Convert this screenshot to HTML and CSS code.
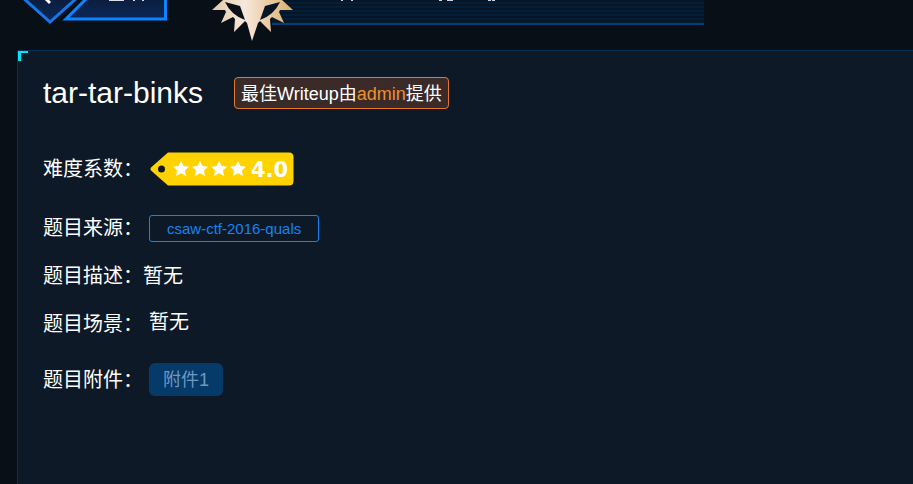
FILE: index.html
```
<!DOCTYPE html>
<html lang="zh-CN">
<head>
  <meta charset="UTF-8" />
  <title>tar-tar-binks</title>
  <meta name="viewport" content="width=device-width, initial-scale=1" />
  <link rel="stylesheet" href="styles.css">
</head>
<body>
  <header class="top-bar">
    <a class="back" href="#" aria-label="返回">
      <svg width="148" height="26" viewBox="0 0 148 26">
        <defs>
          <linearGradient id="backFill" x1="0" y1="0" x2="0" y2="1">
            <stop offset="0" stop-color="#0c1c3c" />
            <stop offset="1" stop-color="#0b2858" />
          </linearGradient>
        </defs>
        <path d="M2 -3 L30 22 L58 -3 Z" fill="url(#backFill)" stroke="#1478e8" stroke-width="3" />
        <path d="M68 -3 L46 19 H145.500 V-3 Z" fill="url(#backFill)" stroke="#0a84ff" stroke-width="3" />
        <path d="M25 -2 L30 3" stroke="#fff" stroke-width="3" />
        <path d="M89 .5 h6 M94 .5 h10 M113 .5 h2 M122 .5 h2" stroke="#d8dde6" stroke-width="1" />
      </svg>
    </a>
    <svg class="medal" width="82" height="42" viewBox="0 0 82 42">
      <defs>
        <linearGradient id="gold" x1="0" y1="0" x2="1" y2="0">
          <stop offset="0" stop-color="#e2c9a6" />
          <stop offset=".4" stop-color="#f7e8dc" />
          <stop offset="1" stop-color="#dcae6c" />
        </linearGradient>
      </defs>
      <path d="M11 0 L0 10 L13 10 L14 12 L9 23 L21 17 L23 19 L22 32 L33 21 L35 23 L40 41 L46 23 L48 21 L59 32 L58 19 L60 17 L72 23 L67 12 L68 10 L81 10 L70 0 Z" fill="url(#gold)" />
      <path d="M13 2 L28 6 L33 20 Q19 15 13 2 Z" fill="#0a1018" />
      <path d="M68 2 L53 6 L48 20 Q62 15 68 2 Z" fill="#061626" />
    </svg>
    <div class="banner">
      <svg width="170" height="2" viewBox="0 0 170 2">
        <path d="M5 .5 h2 M15 .5 h2 M103 .5 h3 M111 .5 h6 M152 .5 h3 M156 .5 h3" stroke="#c9d2dc" stroke-width="1" />
      </svg>
    </div>
  </header>

  <main class="panel">
    <div class="title-row">
      <h1 class="title">tar-tar-binks</h1>
      <div class="writeup">最佳Writeup由<a href="#">admin</a>提供</div>
    </div>

    <div class="row difficulty">
      <span class="label">难度系数：</span>
      <div class="value rating">
        <svg class="tag" width="145" height="34" viewBox="0 0 145 34">
          <path fill="#ffd200" fill-rule="evenodd" d="M19 0.500 H140 Q144.500 .5 144.500 5 V29 Q144.500 33.500 140 33.500 H19 L2 18.500 Q1 17 2 15.500 Z M12.500 13.500 a3.500 3.500 0 1 0 0 7 a3.500 3.500 0 1 0 0 -7 Z" />
          <g fill="#fff">
            <path id="star" d="M32 9 L34.500 14 L40 14.700 L36 18.500 L37 24 L32 21.300 L27 24 L28 18.500 L24 14.700 L29.500 14 Z" />
            <use href="#star" x="19" />
            <use href="#star" x="38" />
            <use href="#star" x="57" />
          </g>
          <text class="score" x="102" y="25">4.0</text>
        </svg>
      </div>
    </div>

    <div class="row source">
      <span class="label">题目来源：</span>
      <a class="value source-link" href="#">csaw-ctf-2016-quals</a>
    </div>

    <div class="row">
      <span class="label">题目描述：</span>
      <span>暂无</span>
    </div>

    <div class="row">
      <span class="label">题目场景：</span>
      <span class="value scene">暂无</span>
    </div>

    <div class="row attachment">
      <span class="label">题目附件：</span>
      <button class="value file" type="button">附件1</button>
    </div>
  </main>
</body>
</html>
```
FILE: styles.css
```
* {
  box-sizing: border-box;
}

body {
  margin: 0;
  min-height: 100vh;
  display: flex;
  flex-direction: column;
  background: #090f17;
  color: #fff;
  font-family: "Liberation Sans", "Noto Sans CJK SC", sans-serif;
  font-size: 20px;
  line-height: 28px;
}

svg {
  display: block;
}

.top-bar {
  display: flex;
  align-items: flex-start;
  height: 50px;
  padding-left: 20px;
}

.medal {
  position: relative;
  z-index: 1;
  margin-left: 44px;
}

.banner {
  width: 432px;
  height: 25px;
  margin-left: -22px;
  padding-left: 64px;
  border-bottom: 2px solid #053c74;
  background: repeating-linear-gradient(#071626 0, #071626 2px, #051e38 2px, #051e38 4px);
}

.panel {
  position: relative;
  flex: 1;
  margin-left: 17px;
  padding: 26px 24px 40px 25px;
  border: 1px solid #083056;
  border-width: 1px 0 0 1px;
  background: #0d1926;
}

.panel::before {
  content: "";
  position: absolute;
  top: 0;
  left: 0;
  width: 7px;
  height: 8px;
  border: solid #00e5ff;
  border-width: 2px 0 0 3px;
}

.title-row {
  display: flex;
  align-items: center;
  gap: 31px;
}

.title {
  margin: 0;
  font-size: 30px;
  line-height: 28px;
  font-weight: normal;
}

.writeup {
  padding: 2px 6px 0;
  border: 1px solid #e8772e;
  border-radius: 4px;
  background: #3a2a28;
  font-size: 18px;
  line-height: 28px;
}

.writeup a {
  color: #f0902e;
  text-decoration: none;
}

.row {
  display: flex;
  align-items: center;
  margin-top: 20px;
}

.value {
  margin-left: 6px;
}

.scene {
  padding-bottom: 4px;
  line-height: 24px;
}

.difficulty {
  margin-top: 43px;
}

.source {
  margin-top: 28px;
}

.attachment {
  margin-top: 25px;
}

.score {
  fill: #fff;
  font-family: "DejaVu Sans", sans-serif;
  font-size: 21px;
  font-weight: bold;
}

.source-link {
  padding: 0 17px;
  border: 1px solid #1683f0;
  border-radius: 3px;
  color: #1683f0;
  font-size: 15px;
  line-height: 25px;
  text-decoration: none;
}

.file {
  height: 33px;
  padding: 0 14px 4px;
  border: 0;
  border-radius: 6px;
  background: #053a69;
  color: #6f96c4;
  font-family: inherit;
  font-size: 18px;
}
```
